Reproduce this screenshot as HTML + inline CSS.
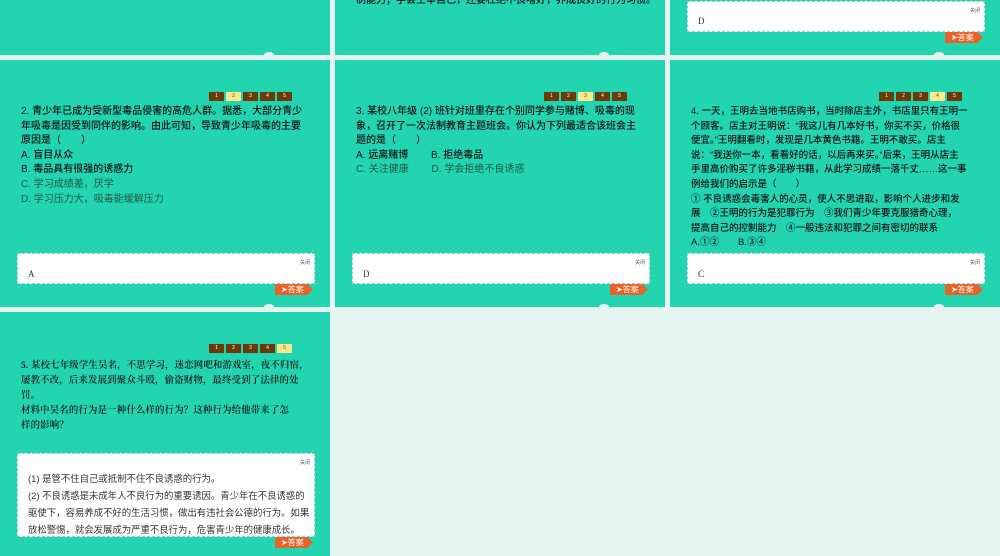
<!DOCTYPE html>
<html><head><meta charset="utf-8"><style>
body{margin:0;width:1000px;height:556px;background:#e4f4ef;position:relative;overflow:hidden;font-family:"Liberation Serif","Noto Serif CJK SC",serif;}
.s{position:absolute;width:330px;height:247px;background:#23d4b1;overflow:hidden}
.t{position:absolute;left:21px;width:300px;white-space:nowrap;font-family:"Liberation Sans","Noto Sans CJK SC",sans-serif;font-size:10px;line-height:14.6px;color:#111;font-weight:500}
.g{color:#1f5a45;font-weight:400}
.nums{position:absolute;left:209px;top:32px;height:9px;display:flex;gap:2px}
.nums span{width:15px;height:9px;background:#6b3a06;color:#fff;font:5px "Liberation Sans";text-align:center;line-height:9px}
.nums span.a{background:#fbe98a;color:#6b3a06}
.box{position:absolute;left:17px;width:296px;background:#fff;border:1px dashed #9cc;font-size:9px;color:#333}
.box .c{position:absolute;right:4px;top:5px;font-size:5px;color:#555;font-family:"Noto Sans CJK SC",sans-serif}
.btn{position:absolute;left:275px;width:32px;height:11px;background:#e8632a;color:#fff;font:8px "Noto Sans CJK SC",sans-serif;line-height:11px;padding-left:6px;clip-path:polygon(0 0,85% 0,100% 50%,85% 100%,0 100%)}
.bump{position:absolute;left:264px;bottom:-3px;width:10px;height:6px;border-radius:50%;background:#eee}
</style></head><body>
<div class="s" style="left:0;top:-192px"><div class="bump"></div></div>
<div class="s" style="left:335px;top:-192px"><div class="t" style="top:186px">制能力；学会主宰自己，还要杜绝不良嗜好，养成良好的行为习惯。</div><div class="bump"></div></div>
<div class="s" style="left:670px;top:-192px"><div class="box" style="top:193px;height:29px"><span class="c">关闭</span><span style="position:absolute;left:10px;top:14px">D</span></div><div class="btn" style="top:224px">➤答案</div><div class="bump"></div></div>

<div class="s" style="left:0;top:60px">
<div class="nums"><span>1</span><span class="a">2</span><span>3</span><span>4</span><span>5</span></div>
<div class="t" style="top:45px">2. 青少年已成为受新型毒品侵害的高危人群。据悉，大部分青少<br>年吸毒是因受到同伴的影响。由此可知，导致青少年吸毒的主要<br>原因是（　　）<br>A. 盲目从众<br>B. 毒品具有很强的诱惑力<br><span class="g">C. 学习成绩差，厌学<br>D. 学习压力大，吸毒能缓解压力</span></div>
<div class="box" style="top:193px;height:29px"><span class="c">关闭</span><span style="position:absolute;left:10px;top:15px">A</span></div><div class="btn" style="top:224px">➤答案</div><div class="bump"></div></div>
<div class="s" style="left:335px;top:60px">
<div class="nums"><span>1</span><span>2</span><span class="a">3</span><span>4</span><span>5</span></div>
<div class="t" style="top:45px">3. 某校八年级 (2) 班针对班里存在个别同学参与赌博、吸毒的现<br>象，召开了一次法制教育主题班会。你认为下列最适合该班会主<br>题的是（　　）<br>A. 远离赌博　　 B. 拒绝毒品<br><span class="g">C. 关注健康　　 D. 学会拒绝不良诱惑</span></div>
<div class="box" style="top:193px;height:29px"><span class="c">关闭</span><span style="position:absolute;left:10px;top:15px">D</span></div><div class="btn" style="top:224px">➤答案</div><div class="bump"></div></div>
<div class="s" style="left:670px;top:60px">
<div class="nums"><span>1</span><span>2</span><span>3</span><span class="a">4</span><span>5</span></div>
<div class="t" style="top:45px;height:147px;overflow:hidden;font-size:9.5px">4. 一天，王明去当地书店购书，当时除店主外，书店里只有王明一<br>个顾客。店主对王明说：“我这儿有几本好书，你买不买，价格很<br>便宜。”王明翻看时，发现是几本黄色书籍。王明不敢买。店主<br>说：“我送你一本，看看好的话，以后再来买。”后来，王明从店主<br>手里高价购买了许多淫秽书籍，从此学习成绩一落千丈……这一事<br>例给我们的启示是（　　）<br>① 不良诱惑会毒害人的心灵，使人不思进取，影响个人进步和发<br>展　②王明的行为是犯罪行为　③我们青少年要克服猎奇心理，<br>提高自己的控制能力　④一般违法和犯罪之间有密切的联系<br>A.①②　　B.③④<br>C.①③　　D.②③④</div>
<div class="box" style="top:193px;height:29px"><span class="c">关闭</span><span style="position:absolute;left:10px;top:15px">C</span></div><div class="btn" style="top:224px">➤答案</div><div class="bump"></div></div>

<div class="s" style="left:0;top:312px;height:244px">
<div class="nums"><span>1</span><span>2</span><span>3</span><span>4</span><span class="a">5</span></div>
<div class="t" style="top:47px;font-family:'Liberation Serif','Noto Serif CJK SC',serif;font-size:9.4px;line-height:15px;letter-spacing:0.2px;font-weight:600">5. 某校七年级学生吴名，不思学习，迷恋网吧和游戏室，夜不归宿，<br>屡教不改，后来发展到聚众斗殴，偷盗财物，最终受到了法律的处<br>罚。<br>材料中吴名的行为是一种什么样的行为？这种行为给他带来了怎<br>样的影响？</div>
<div class="box" style="top:141px;height:82px"><span class="c">关闭</span><div style="position:absolute;left:10px;top:16px;white-space:nowrap;font-family:'Liberation Sans','Noto Sans CJK SC',sans-serif;font-size:9.4px;line-height:17px">(1) 是管不住自己或抵制不住不良诱惑的行为。<br>(2) 不良诱惑是未成年人不良行为的重要诱因。青少年在不良诱惑的<br>驱使下，容易养成不好的生活习惯，做出有违社会公德的行为。如果<br>放松警惕，就会发展成为严重不良行为，危害青少年的健康成长。</div></div><div class="btn" style="top:225px">➤答案</div></div>
</body></html>
